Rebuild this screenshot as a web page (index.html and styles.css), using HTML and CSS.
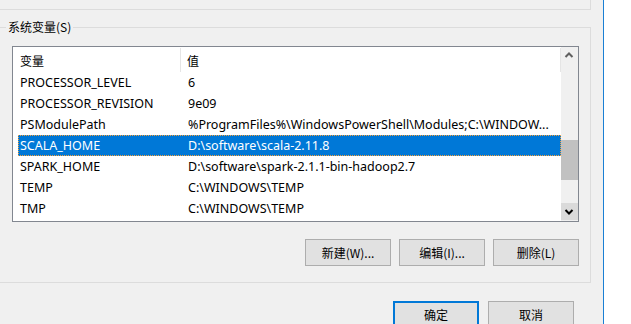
FILE: index.html
```html
<!DOCTYPE html>
<html lang="zh-CN">
<head>
    <meta charset="UTF-8">
    <meta name="viewport" content="width=device-width, initial-scale=1.0">
    <title>环境变量</title>
    <link rel="stylesheet" href="styles.css">
</head>
<body>
    <div class="screen">
        <div class="dialog">
            <div class="prev-group"></div>

            <fieldset class="group">
                <legend>系统变量(S)</legend>
                <div class="list">
                    <div class="list-body">
                        <div class="list-head">
                            <span class="head-name">变量</span>
                            <span class="head-value">值</span>
                        </div>
                        <div class="row"><span class="name">PROCESSOR_LEVEL</span><span class="value">6</span></div>
                        <div class="row"><span class="name">PROCESSOR_REVISION</span><span class="value">9e09</span></div>
                        <div class="row"><span class="name">PSModulePath</span><span class="value">%ProgramFiles%\WindowsPowerShell\Modules;C:\WINDOW...</span></div>
                        <div class="row selected"><span class="name">SCALA_HOME</span><span class="value">D:\software\scala-2.11.8</span></div>
                        <div class="row"><span class="name">SPARK_HOME</span><span class="value">D:\software\spark-2.1.1-bin-hadoop2.7</span></div>
                        <div class="row"><span class="name">TEMP</span><span class="value">C:\WINDOWS\TEMP</span></div>
                        <div class="row"><span class="name">TMP</span><span class="value">C:\WINDOWS\TEMP</span></div>
                    </div>
                    <div class="scrollbar">
                        <div class="sb-btn">
                            <svg width="17" height="17" viewBox="0 0 17 17"><polyline points="4.5,10 8,6.5 11.5,10" fill="none" stroke="#606060" stroke-width="2"/></svg>
                        </div>
                        <div class="sb-track"><div class="sb-thumb"></div></div>
                        <div class="sb-btn sb-down">
                            <svg width="17" height="17" viewBox="0 0 17 17"><polyline points="4.5,7 8,10.5 11.5,7" fill="none" stroke="#000" stroke-width="2"/></svg>
                        </div>
                    </div>
                </div>

                <div class="actions">
                    <button class="btn">新建(W)...</button>
                    <button class="btn">编辑(I)...</button>
                    <button class="btn">删除(L)</button>
                </div>
            </fieldset>

            <div class="footer">
                <button class="btn default">确定</button>
                <button class="btn">取消</button>
            </div>
        </div>
        <div class="edge"></div>
        <div class="outside"></div>
    </div>
</body>
</html>
```

FILE: styles.css
```css
* {
    box-sizing: border-box;
}

body {
    margin: 0;
    padding: 0;
    background-color: #f0f0f0;
    font-family: "Noto Sans", "Noto Sans CJK SC", sans-serif;
    color: #000;
}

.screen {
    display: flex;
    width: 631px;
    height: 324px;
    overflow: hidden;
}

.dialog {
    width: 603px;
    flex: none;
}

.prev-group {
    width: 591px;
    height: 10px;
    border-right: 1px solid #dcdcdc;
    border-bottom: 1px solid #dcdcdc;
}

.group {
    width: 591px;
    margin: 9px 0 0 0;
    padding: 0 11px 16px 6px;
    border: 1px solid #dcdcdc;
    border-left: none;
    min-width: 0;
}

.group legend {
    padding: 0 2px;
    font-family: "Noto Sans CJK SC", sans-serif;
    font-size: 12px;
    line-height: 16px;
}

.list {
    display: flex;
    margin: 11px 0 0 6px;
    height: 176px;
    border: 1px solid #828790;
    background-color: #fff;
}

.list-body {
    flex: 1;
    font-size: 12.5px;
    white-space: nowrap;
    overflow: hidden;
}

.list-head {
    display: flex;
    height: 25px;
    align-items: stretch;
    font-family: "Noto Sans CJK SC", sans-serif;
    font-size: 12px;
}

.head-name {
    width: 168px;
    padding-left: 7px;
    display: flex;
    align-items: center;
    border-right: 1px solid #e5e5e5;
    margin-top: 1px;
}

.head-value {
    flex: 1;
    padding-left: 6px;
    display: flex;
    align-items: center;
    border-right: 1px solid #e5e5e5;
    margin-top: 1px;
}

.row {
    display: flex;
    height: 21px;
    line-height: 21px;
    margin-left: 5px;
}

.row .name {
    width: 163px;
    padding-left: 2px;
}

.row .value {
    flex: 1;
    padding-left: 7px;
    overflow: hidden;
}

.row.selected {
    background-color: #0078d7;
    color: #fff;
    outline: 1px dotted #f7a13a;
    outline-offset: -1px;
}

.scrollbar {
    width: 17px;
    display: flex;
    flex-direction: column;
    background-color: #f0f0f0;
}

.sb-btn {
    height: 17px;
    flex: none;
}

.sb-btn svg {
    display: block;
}

.sb-down {
    background-color: #dadada;
    margin-bottom: 1px;
}

.sb-track {
    flex: 1;
}

.sb-thumb {
    margin-top: 76px;
    height: 40px;
    background-color: #c1c1c1;
}

.actions {
    display: flex;
    justify-content: flex-end;
    gap: 8px;
    margin-top: 17px;
}

.btn {
    width: 86px;
    height: 27px;
    padding: 0;
    background-color: #e1e1e1;
    border: 1px solid #adadad;
    font-family: "Noto Sans CJK SC", sans-serif;
    font-size: 12px;
    color: #000;
}

.btn.default {
    border: 2px solid #0078d7;
}

.footer {
    width: 574px;
    display: flex;
    justify-content: flex-end;
    gap: 9px;
    margin-top: 18px;
}

.edge {
    width: 1px;
    flex: none;
    background-color: #1a7fd4;
}

.outside {
    flex: 1;
    background-color: #fff;
}
```
